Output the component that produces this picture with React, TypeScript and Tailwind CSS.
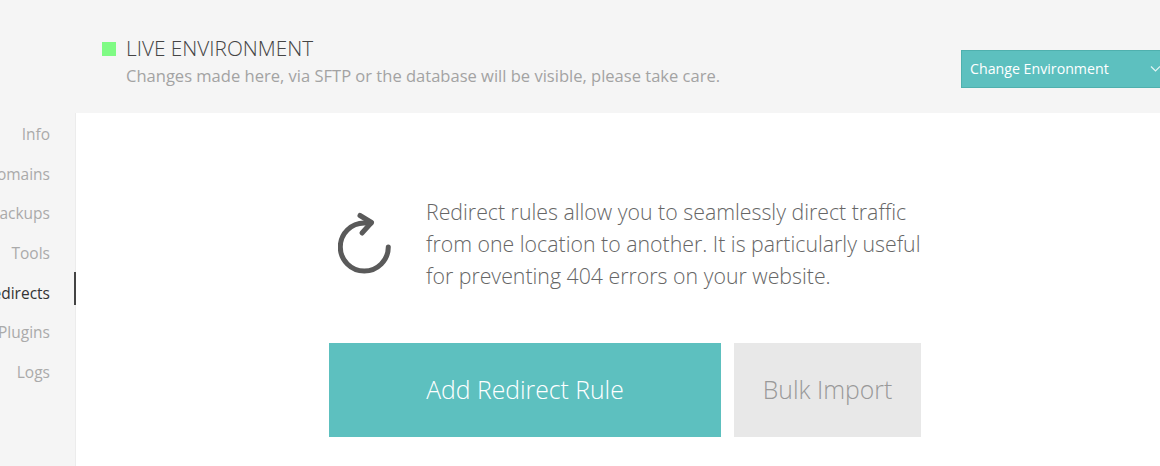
const navItems = ["Info", "Domains", "Backups", "Tools", "Redirects", "Plugins", "Logs"];

const App = () => {
  return (
    <div className="h-[466px] w-[1160px] overflow-hidden bg-[#f5f5f5] font-['Open_Sans',sans-serif]">
      {/* Environment header */}
      <header className="flex h-[113px] items-start pl-[102px]">
        <div className="mt-[42px] h-[14px] w-[14px] shrink-0 bg-[#7ffb84]" />
        <div className="ml-[10px] w-[835px] shrink-0 pt-[35px]">
          <h1 className="text-[20.8px] font-light leading-[26px] text-[#444]">LIVE ENVIRONMENT</h1>
          <p className="mt-[2px] text-[16.55px] leading-[26px] text-[#a3a3a3]">
            Changes made here, via SFTP or the database will be visible, please take care.
          </p>
        </div>
        <button className="mt-[50px] flex h-[38px] w-[220px] shrink-0 items-center border border-[#4fb0ae] bg-[#5dc0bf] pb-[1px] pl-2 text-left text-[14.2px] text-white">
          Change Environment
          <svg className="ml-[41px] mt-[1px]" width="12" height="8" viewBox="0 0 12 8" fill="none" stroke="#e4f5f5" strokeWidth="1.2">
            <path d="M1 1.5l4.5 4.5L10 1.5" />
          </svg>
        </button>
      </header>

      <div className="flex h-[353px]">
        {/* Side nav */}
        <nav className="flex w-[76px] shrink-0 flex-col items-end gap-[15.1px] border-r border-[#ececec] pt-[9px]">
          {navItems.map((item) => (
            <a
              key={item}
              className={`relative whitespace-nowrap pr-[25px] text-[15.5px] leading-[24.6px] ${
                item === "Redirects" ? "text-[#333]" : "text-[#aaa]"
              }`}
            >
              {item}
              {item === "Redirects" && (
                <span className="absolute right-[-1px] top-[-9px] h-[33px] w-[2px] bg-[#444]" />
              )}
            </a>
          ))}
        </nav>

        {/* Redirects empty state */}
        <main className="flex-1 bg-white pl-[253px] pt-[83px]">
          <div className="flex items-center">
            <svg className="ml-[9px] shrink-0" width="56" height="66" viewBox="0 0 56 66" fill="none" stroke="#5a5a5a" strokeWidth="5" strokeLinecap="round" strokeLinejoin="round">
              <path d="M50.3 36a24 24 0 1 1-24-24H33" />
              <path d="M22 4.5l11.5 7L24 22" />
            </svg>
            <p className="ml-[32px] w-[510px] text-[21.3px] font-light leading-[32px] text-[#666]">
              Redirect rules allow you to seamlessly direct traffic
              <br />
              from one location to another. It is particularly useful
              <br />
              for preventing 404 errors on your website.
            </p>
          </div>
          <div className="mt-[51px] flex gap-[13px]">
            <button className="h-[94px] w-[392px] bg-[#5dc0bf] text-[24.75px] font-light text-white">
              Add Redirect Rule
            </button>
            <button className="h-[94px] w-[187px] bg-[#e8e8e8] text-[24.75px] font-light text-[#999]">
              Bulk Import
            </button>
          </div>
        </main>
      </div>
    </div>
  );
};

export default App;
